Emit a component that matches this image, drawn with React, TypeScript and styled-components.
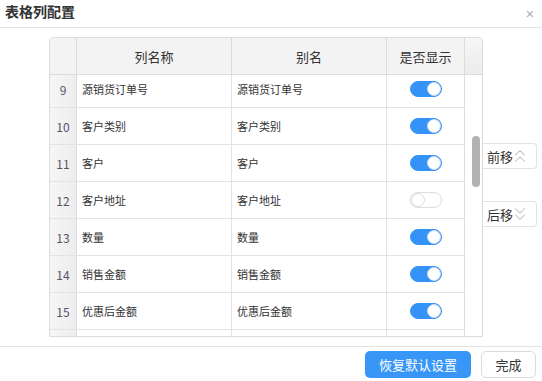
import React from 'react';
import styled, { createGlobalStyle } from 'styled-components';
import { ChevronsUp, ChevronsDown } from 'lucide-react';

const GlobalStyle = createGlobalStyle`
  body {
    margin: 0;
    background: #fff;
    font-family: "Noto Sans CJK SC", "Liberation Sans", sans-serif;
    color: #333;
  }
`;

type Row = { no: number; name: string; alias: string; show: boolean };

const rows: Row[] = [
  { no: 9, name: '源销货订单号', alias: '源销货订单号', show: true },
  { no: 10, name: '客户类别', alias: '客户类别', show: true },
  { no: 11, name: '客户', alias: '客户', show: true },
  { no: 12, name: '客户地址', alias: '客户地址', show: false },
  { no: 13, name: '数量', alias: '数量', show: true },
  { no: 14, name: '销售金额', alias: '销售金额', show: true },
  { no: 15, name: '优惠后金额', alias: '优惠后金额', show: true },
  { no: 16, name: '', alias: '', show: true },
];

const App: React.FC = () => {
  return (
    <Dialog>
      <GlobalStyle />
      <Header>
        <Title>表格列配置</Title>
        <Close>×</Close>
      </Header>
      <Body>
        <Table>
          <HeadRow>
            <HeadCell />
            <HeadCell>列名称</HeadCell>
            <HeadCell>别名</HeadCell>
            <HeadCell>是否显示</HeadCell>
            <HeadCell />
          </HeadRow>
          <BodyArea>
            <RowList>
              {rows.map((r) => (
                <DataRow key={r.no}>
                  <IndexCell>{r.no !== 16 ? r.no : ''}</IndexCell>
                  <TextCell>{r.name}</TextCell>
                  <TextCell>{r.alias}</TextCell>
                  <SwitchCell>{r.no !== 16 && <Toggle $on={r.show} />}</SwitchCell>
                </DataRow>
              ))}
            </RowList>
            <ScrollTrack>
              <Thumb />
            </ScrollTrack>
          </BodyArea>
        </Table>
        <Side>
          <MoveButton>
            前移
            <ChevronsUp size={22} strokeWidth={1.1} color="#c2c2c2" />
          </MoveButton>
          <MoveButton>
            后移
            <ChevronsDown size={22} strokeWidth={1.1} color="#c2c2c2" />
          </MoveButton>
        </Side>
      </Body>
      <Footer>
        <PrimaryButton>恢复默认设置</PrimaryButton>
        <PlainButton>完成</PlainButton>
      </Footer>
    </Dialog>
  );
};

const Dialog = styled.div`
  width: 542px;
  height: 381px;
  display: flex;
  flex-direction: column;
  background: #fff;
`;

const Header = styled.div`
  height: 27px;
  flex-shrink: 0;
  display: flex;
  align-items: center;
  justify-content: space-between;
  padding: 0 8px 0 5px;
  border-bottom: 1px solid #e3e3e3;
`;

const Title = styled.div`
  font-size: 14px;
  font-weight: 700;
  color: #333;
  margin-top: -5px;
`;

const Close = styled.div`
  font-size: 14px;
  color: #aaa;
  font-family: "Liberation Sans", sans-serif;
`;

const Body = styled.div`
  flex: 1;
  display: flex;
  align-items: flex-start;
  padding: 9px 0 0 49px;
  border-bottom: 1px solid #e3e3e3;
`;

const Table = styled.div`
  width: 432px;
  height: 298px;
  border: 1px solid #dcdcdc;
  border-radius: 4px 4px 0 0;
  display: flex;
  flex-direction: column;
  overflow: hidden;
  position: relative;
  z-index: 1;
  background: #fff;
`;

const HeadRow = styled.div`
  display: grid;
  grid-template-columns: 27px 155px 155px 78px 17px;
  height: 36px;
  border-bottom: 1px solid #dcdcdc;
  background: #f3f3f3;
`;

const HeadCell = styled.div`
  display: flex;
  align-items: center;
  justify-content: center;
  font-size: 13px;
  color: #333;
  border-right: 1px solid #dcdcdc;
  &:last-child {
    border-right: none;
    background: linear-gradient(#f6f6f6, #ececec);
  }
`;

const BodyArea = styled.div`
  flex: 1;
  display: flex;
  overflow: hidden;
`;

const RowList = styled.div`
  width: 415px;
  margin-top: -4px;
`;

const DataRow = styled.div`
  display: grid;
  grid-template-columns: 27px 155px 155px 78px;
  height: 36px;
  border-bottom: 1px solid #e3e3e3;
`;

const IndexCell = styled.div`
  display: flex;
  align-items: center;
  justify-content: center;
  font-size: 12px;
  color: #556;
  background: linear-gradient(90deg, #f6f6f6, #ededed);
  border-right: 1px solid #dcdcdc;
`;

const TextCell = styled.div`
  display: flex;
  align-items: center;
  padding-left: 5px;
  font-size: 11px;
  color: #333;
  border-right: 1px solid #e3e3e3;
`;

const SwitchCell = styled.div`
  display: flex;
  align-items: center;
  justify-content: center;
  border-right: 1px solid #dcdcdc;
`;

const Toggle = styled.span<{ $on: boolean }>`
  width: 32px;
  height: 16px;
  box-sizing: border-box;
  border-radius: 8px;
  display: flex;
  justify-content: ${(p) => (p.$on ? 'flex-end' : 'flex-start')};
  background: ${(p) => (p.$on ? '#3592f7' : '#fff')};
  border: 1px solid ${(p) => (p.$on ? '#3592f7' : '#dcdcdc')};
  &::after {
    content: '';
    width: 14px;
    height: 14px;
    box-sizing: border-box;
    border-radius: 50%;
    background: #fff;
    border: 1px solid ${(p) => (p.$on ? '#c9dcf2' : '#dcdcdc')};
  }
`;

const ScrollTrack = styled.div`
  width: 17px;
  position: relative;
`;

const Thumb = styled.div`
  position: absolute;
  left: 7px;
  top: 61px;
  width: 8px;
  height: 51px;
  border-radius: 4px;
  background: #b2b2b2;
`;

const Side = styled.div`
  display: flex;
  flex-direction: column;
  gap: 32px;
  padding-top: 106px;
  margin-left: -1px;
`;

const MoveButton = styled.div`
  width: 49px;
  height: 24px;
  display: flex;
  align-items: center;
  gap: 0;
  padding-left: 5px;
  font-size: 13px;
  color: #333;
  border: 1px solid #e3e3e3;
  border-left: none;
  border-radius: 0 4px 4px 0;
  background: #fff;
  svg {
    margin-left: -4px;
  }
`;

const Footer = styled.div`
  height: 30px;
  flex-shrink: 0;
  display: flex;
  justify-content: flex-end;
  align-items: flex-start;
  gap: 10px;
  padding: 4px 6px 0 0;
`;

const PrimaryButton = styled.button`
  height: 27px;
  width: 106px;
  border: none;
  border-radius: 5px;
  background: #3896f6;
  color: #fff;
  font-size: 13px;
  font-family: inherit;
  padding: 0;
`;

const PlainButton = styled.button`
  height: 27px;
  width: 55px;
  border: 1px solid #dcdcdc;
  border-radius: 5px;
  background: #fff;
  color: #333;
  font-size: 13px;
  font-family: inherit;
  padding: 0;
`;

export default App;
